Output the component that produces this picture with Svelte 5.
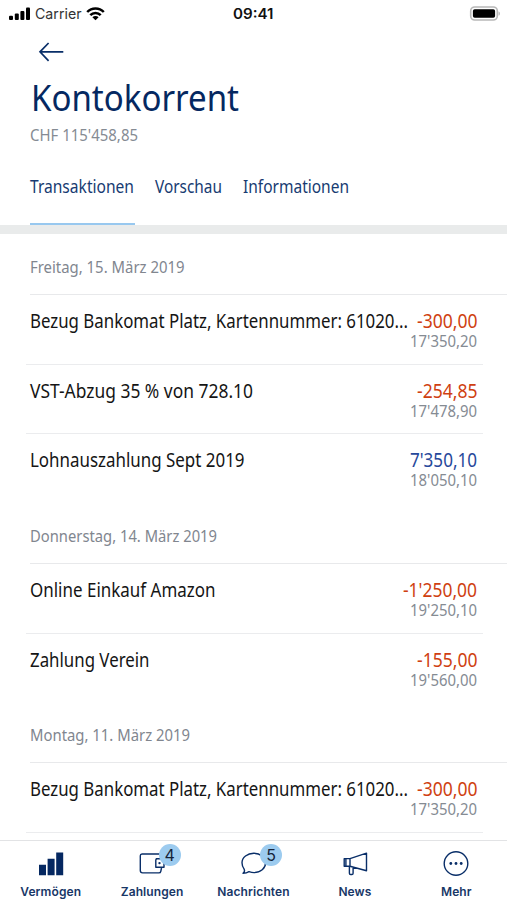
<script>
  const tabs = [
    { label: 'Transaktionen', w: 104 },
    { label: 'Vorschau', w: 67 },
    { label: 'Informationen', w: 106 }
  ];
  const days = [
    {
      date: 'Freitag, 15. März 2019', w: 154.5,
      rows: [
        { text: 'Bezug Bankomat Platz, Kartennummer: 61020...', w: 378, amount: '-300,00', aw: 60.5, balance: "17'350,20", bw: 67 },
        { text: 'VST-Abzug 35 % von 728.10', w: 223, amount: '-254,85', aw: 60.5, balance: "17'478,90", bw: 67 },
        { text: 'Lohnauszahlung Sept 2019', w: 214.5, amount: "7'350,10", aw: 67, balance: "18'050,10", bw: 67, credit: true }
      ]
    },
    {
      date: 'Donnerstag, 14. März 2019', w: 187,
      rows: [
        { text: 'Online Einkauf Amazon', w: 185.5, amount: "-1'250,00", aw: 74, balance: "19'250,10", bw: 67 },
        { text: 'Zahlung Verein', w: 119.5, amount: '-155,00', aw: 60.5, balance: "19'560,00", bw: 67 }
      ]
    },
    {
      date: 'Montag, 11. März 2019', w: 160,
      rows: [
        { text: 'Bezug Bankomat Platz, Kartennummer: 61020...', w: 378, amount: '-300,00', aw: 60.5, balance: "17'350,20", bw: 67 }
      ]
    }
  ];
  const nav = [
    { id: 'assets', label: 'Vermögen' },
    { id: 'payments', label: 'Zahlungen', badge: 4 },
    { id: 'messages', label: 'Nachrichten', badge: 5 },
    { id: 'news', label: 'News' },
    { id: 'more', label: 'Mehr' }
  ];
</script>

{#snippet fit(text, w, h, base)}
  <svg class="fit" width={w} height={h}><text x="0" y={base} textLength={w} lengthAdjust="spacingAndGlyphs">{text}</text></svg>
{/snippet}

<div class="screen">
  <div class="status">
    <div class="left">
      <svg width="22" height="14" viewBox="0 0 22 14">
        <rect x="0" y="8.8" width="4" height="4.2" rx="1" /><rect x="5.8" y="6.6" width="4" height="6.4" rx="1" />
        <rect x="11.4" y="4" width="4" height="9" rx="1" /><rect x="17" y="0.6" width="4" height="12.4" rx="1" />
      </svg>
      <span class="carrier">{@render fit('Carrier', 46.5, 20, 15.3)}</span>
      <svg width="19" height="14" viewBox="0 0 19 14">
        <path d="M1.2 5a11.6 11.6 0 0 1 16.6 0M4.3 8.2a7.2 7.2 0 0 1 10.4 0" fill="none" stroke="#000" stroke-width="2.5" />
        <path d="M9.5 13.3 6.4 10.2a4.4 4.4 0 0 1 6.2 0Z" />
      </svg>
    </div>
    <span class="time">{@render fit('09:41', 40.5, 20, 15.3)}</span>
    <svg class="battery" width="32" height="16" viewBox="0 0 32 16">
      <rect x="1.7" y="1" width="26.6" height="13" rx="4" fill="#fff" stroke="#b8b8b8" stroke-width="1.6" />
      <rect x="3.9" y="3.2" width="22.2" height="8.6" rx="1.8" />
      <path d="M29.6 5.4v4.2c1.6-.5 1.6-3.7 0-4.2Z" fill="#aaa" />
    </svg>
  </div>

  <header>
    <svg class="back" width="26" height="20" viewBox="0 0 26 20" fill="none" stroke="#092e68" stroke-width="1.7">
      <path d="M25.3 9.8H2M10.6 1 2 9.8l8.6 9" />
    </svg>
    <h1>{@render fit('Kontokorrent', 208, 44, 36.3)}</h1>
    <div class="total">{@render fit("CHF 115'458,85", 108, 22, 16)}</div>
    <nav class="tabs">
      {#each tabs as t, i}
        <div class="tab" class:active={i === 0}>{@render fit(t.label, t.w, 24, 17)}</div>
      {/each}
    </nav>
  </header>

  <main>
    {#each days as d}
      <section>
        <div class="date">{@render fit(d.date, d.w, 24, 17.5)}</div>
        {#each d.rows as r}
          <div class="row">
            <div class="text">{@render fit(r.text, r.w, 24, 18)}</div>
            <div class="nums">
              <div class="amount" class:credit={r.credit}>{@render fit(r.amount, r.aw, 24, 18)}</div>
              <div class="balance">{@render fit(r.balance, r.bw, 20, 13.3)}</div>
            </div>
          </div>
        {/each}
      </section>
    {/each}
  </main>

  <nav class="bottom">
    {#each nav as n}
      <div class="item">
        <div class="icon">
          <svg width="28" height="28" viewBox="0 0 28 28" fill="none" stroke="#092e68" stroke-width="1.4" stroke-linejoin="round">
            {#if n.id === 'assets'}
              <path d="M2 15.8h7v10.4H2ZM10.6 9.8h7v16.4h-7ZM19.2 3.6h7v22.6h-7Z" fill="#052861" stroke="none" />
            {:else if n.id === 'payments'}
              <path d="M22.8 10V6.4Q22.8 5 21.2 5H4Q2.3 5 2.3 6.8V21.6Q2.3 23.9 4.6 23.9H20.8Q22.5 23.9 22.8 22.3L23.5 19M18.4 9.7H26v8.6h-8.2V11q0-1.3 1.3-1.3Z" />
              <circle cx="21.5" cy="14.1" r="1.2" fill="#092e68" stroke="none" />
            {:else if n.id === 'messages'}
              <path d="M3 24.3C4.8 22.9 4.9 21.5 4 19.8A10 10 0 0 1 2 13.8C2 8.3 7.4 4.2 13.8 4.2S25.6 8.3 25.6 13.8 20.5 23.6 14 23.6c-2 0-3.3-.4-5-1-1.6 1.1-3.6 1.7-6 1.7Z" />
            {:else if n.id === 'news'}
              <path d="M25.5 4.2v17.5L9 17.3H3.2V9.6H9ZM9 9.6v7.7M4.9 9.8V17.2M8.4 17.3v7q0 1.2 1.2 1.2h1.3q1.2 0 1.2-1.2V18.2" />
            {:else}
              <circle cx="14" cy="14.5" r="11.8" />
              <g fill="#092e68" stroke="none"><circle cx="8.8" cy="14.5" r="1.4" /><circle cx="14" cy="14.5" r="1.4" /><circle cx="19.2" cy="14.5" r="1.4" /></g>
            {/if}
          </svg>
          {#if n.badge}<span class="badge">{n.badge}</span>{/if}
        </div>
        <span class="label">{n.label}</span>
      </div>
    {/each}
  </nav>
</div>

<style>
  :global(body) { margin: 0; background: #fff; }
  .screen { width: 507px; height: 900px; display: flex; flex-direction: column; overflow: hidden; background: #fff; font-family: "Noto Sans", "Open Sans", sans-serif; }
  svg { display: block; flex: none; }
  .fit { overflow: visible; fill: currentColor; }
  .status { height: 27px; flex: none; display: flex; align-items: center; justify-content: space-between; padding: 0 6px 0 9px; box-sizing: border-box; font-family: Inter, sans-serif; font-size: 14.5px; color: #111; }
  .left { display: flex; align-items: center; gap: 4.5px; width: 224px; }
  .carrier { color: #333; margin-right: 0; margin-left: -1px; }
  .time { font-weight: 600; margin-right: auto; }
  header { height: 197.5px; box-sizing: content-box; flex: none; padding-left: 30px; display: flex; flex-direction: column; border-bottom: 9.5px solid #e9ebeb; }
  .back { margin: 14.5px 0 0 8px; }
  h1 { margin: 13px 0 0 1px; font-size: 37px; font-weight: 400; color: #052861; height: 44px; }
  .total { margin-top: 6px; font-size: 16px; color: #858b93; height: 22px; }
  .tabs { display: flex; gap: 21px; margin-top: 29px; height: 49px; color: #173b72; font-size: 18px; }
  .tab { box-sizing: border-box; height: 49px; }
  .tab.active { border-bottom: 2.5px solid #98c8ef; width: 105px; margin-right: -1px; }
  main { flex: 1; min-height: 0; overflow: hidden; }
  .date { height: 60.8px; box-sizing: border-box; padding-top: 21px; margin-left: 30px; border-bottom: 1px solid #e8e9eb; font-size: 16.5px; color: #81868f; }
  .row { height: 69.7px; box-sizing: border-box; margin: 0 24px 0 26px; padding: 15px 6px 0 4px; display: flex; justify-content: space-between; border-bottom: 1px solid #ebecee; font-size: 19px; color: #151515; }
  .row:last-child { border-color: transparent; height: 68.7px; }
  section:last-child .row { border-color: #ebecee; height: 69.7px; }
  .nums { display: flex; flex-direction: column; align-items: flex-end; }
  .amount { color: #cf3f11; }
  .amount.credit { color: #27489b; }
  .balance { font-size: 16.5px; color: #858b93; }
  .bottom { height: 60px; flex: none; box-sizing: border-box; border-top: 1.5px solid #e2e3e5; display: flex; background: #fff; }
  .item { flex: 1; display: flex; flex-direction: column; align-items: center; padding-top: 7.5px; }
  .icon { position: relative; width: 28px; height: 28px; }
  .badge { position: absolute; left: 20.5px; top: -5px; width: 22px; height: 22px; border-radius: 50%; background: #9ccbef; color: #142238; font: 16px/22px Inter, sans-serif; text-align: center; }
  .label { margin-top: 6px; font: 600 12px/18px Inter, sans-serif; letter-spacing: 0.1px; color: #183767; }
  main { padding-top: 0.7px; }
</style>
